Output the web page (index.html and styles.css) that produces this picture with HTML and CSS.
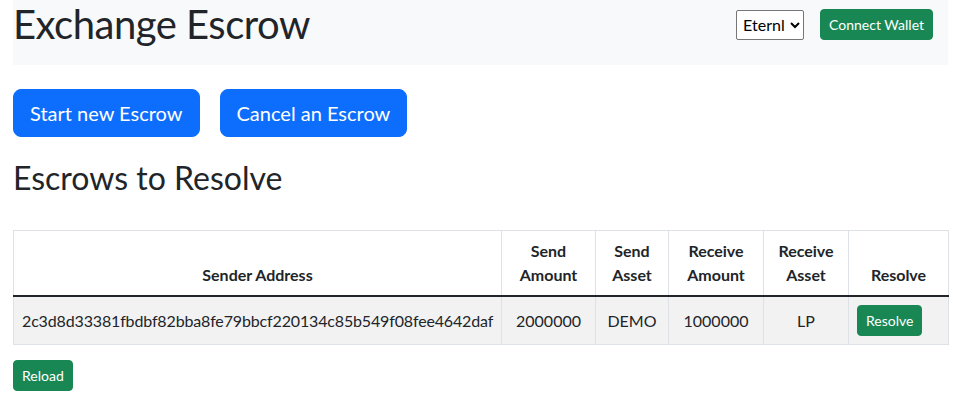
FILE: index.html
```html
<!DOCTYPE html>
<html lang="en">
<head>
<meta charset="utf-8">
<title>Exchange Escrow</title>
<link rel="stylesheet" href="styles.css">
</head>
<body>
<div class="page">
  <header class="topbar">
    <h1 class="title">Exchange Escrow</h1>
    <div class="wallet">
      <select class="wallet-select">
        <option>Eternl</option>
      </select>
      <button class="btn btn-success btn-sm">Connect Wallet</button>
    </div>
  </header>

  <div class="actions">
    <button class="btn btn-primary btn-lg">Start new Escrow</button>
    <button class="btn btn-primary btn-lg">Cancel an Escrow</button>
  </div>

  <h2 class="section-title">Escrows to Resolve</h2>

  <table class="escrows">
    <colgroup>
      <col class="c-addr">
      <col class="c-samt">
      <col class="c-sasset">
      <col class="c-ramt">
      <col class="c-rasset">
      <col class="c-resolve">
    </colgroup>
    <thead>
      <tr>
        <th>Sender Address</th>
        <th>Send Amount</th>
        <th>Send Asset</th>
        <th>Receive Amount</th>
        <th>Receive Asset</th>
        <th>Resolve</th>
      </tr>
    </thead>
    <tbody>
      <tr>
        <td class="cell-addr">2c3d8d33381fbdbf82bba8fe79bbcf220134c85b549f08fee4642daf</td>
        <td>2000000</td>
        <td>DEMO</td>
        <td>1000000</td>
        <td>LP</td>
        <td class="cell-action"><button class="btn btn-success btn-sm">Resolve</button></td>
      </tr>
    </tbody>
  </table>

  <button class="btn btn-success btn-sm reload">Reload</button>
</div>
</body>
</html>
```

FILE: styles.css
```css
* { box-sizing: border-box; }

html, body {
  margin: 0;
  padding: 0;
  background: #fff;
}

body {
  font-family: "Lato", "Open Sans", sans-serif;
  font-size: 16px;
  line-height: 1.5;
  color: #212529;
}

.page {
  padding: 0 5px 0 13px;
}

.topbar {
  display: flex;
  justify-content: space-between;
  align-items: flex-start;
  background: #f8f9fa;
  height: 65px;
}

.title {
  margin: 0;
  font-size: 40px;
  font-weight: 400;
  line-height: 1.2;
  letter-spacing: -0.5px;
}

.wallet {
  display: flex;
  align-items: center;
  gap: 16px;
  margin: 9px 15px 0 0;
}

.wallet-select {
  height: 30px;
  font-family: inherit;
  font-size: 16px;
  color: #000;
  background: #fff;
  border: 1px solid #767676;
  border-radius: 2px;
  padding: 0 2px;
}

.btn {
  display: inline-block;
  font-family: inherit;
  font-weight: 400;
  line-height: 1.5;
  color: #fff;
  text-align: center;
  border: 1px solid transparent;
  cursor: pointer;
}

.btn-sm {
  padding: 4px 8px;
  font-size: 14px;
  border-radius: 4px;
}

.btn-lg {
  padding: 8px 16px;
  font-size: 20px;
  border-radius: 8px;
}

.btn-success {
  background: #198754;
  border-color: #198754;
}

.btn-primary {
  background: #0d6efd;
  border-color: #0d6efd;
}

.actions {
  display: flex;
  gap: 20px;
  margin-top: 24px;
}

.section-title {
  margin: 22px 0 33px;
  font-size: 32px;
  font-weight: 400;
  line-height: 1.2;
}

.escrows {
  width: 935px;
  border-collapse: collapse;
  table-layout: fixed;
  margin-bottom: 15px;
}

.c-addr { width: 488px; }
.c-samt { width: 94px; }
.c-sasset { width: 73px; }
.c-ramt { width: 95px; }
.c-rasset { width: 85px; }
.c-resolve { width: 100px; }

.escrows th,
.escrows td {
  border: 1px solid #dee2e6;
  padding: 8px;
  text-align: center;
}

.escrows th {
  vertical-align: bottom;
  font-weight: 700;
}

.escrows thead th {
  border-bottom: 2px solid #212529;
}

.escrows td {
  vertical-align: middle;
  background: #f2f2f2;
  white-space: nowrap;
}

.escrows td.cell-addr {
  letter-spacing: -0.15px;
}

.escrows td.cell-action {
  text-align: left;
}

.reload {
  display: block;
}
```
